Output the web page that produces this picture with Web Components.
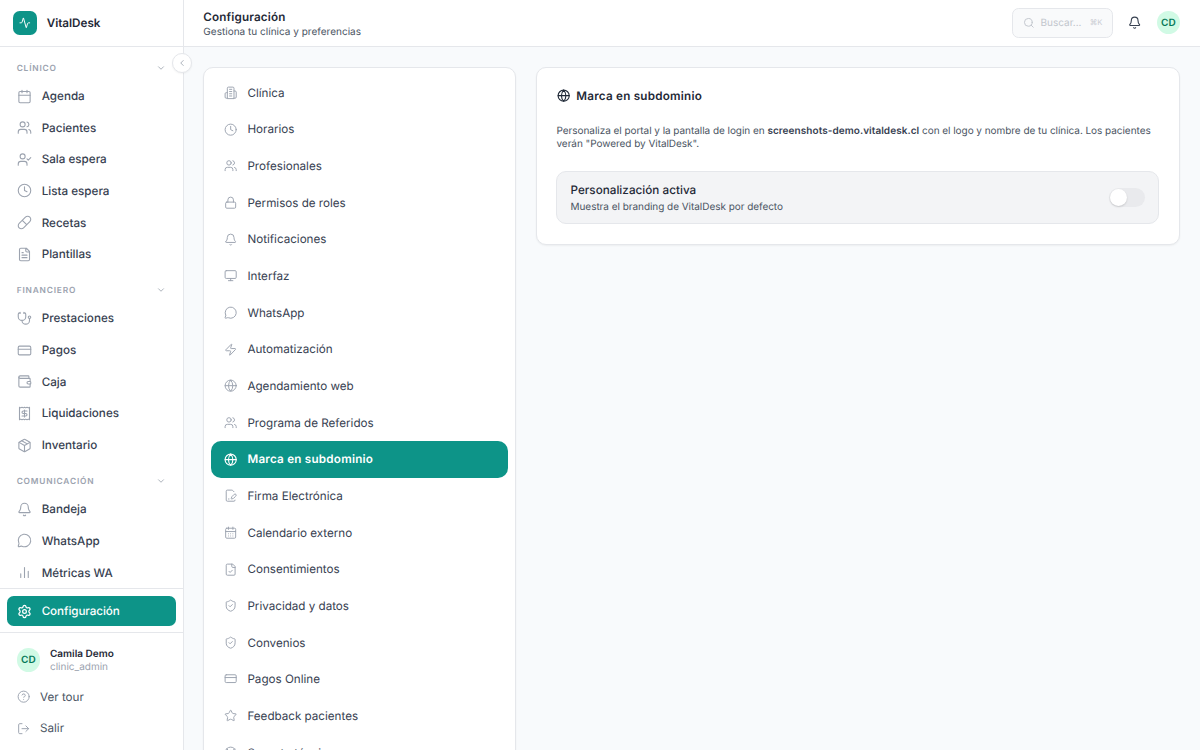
<!DOCTYPE html>
<html lang="es">
<head>
<meta charset="utf-8">
<title>VitalDesk – Configuración</title>
<style>
html,body{margin:0;height:100%;overflow:hidden}
body{font-family:Inter,"Liberation Sans",sans-serif;font-size:11.67px;color:#1f2937;background:#f8fafc;text-rendering:geometricPrecision}
</style>
</head>
<body>
<vd-app></vd-app>
<script>
const ICONS = {
  activity:'<path d="M22 12h-2.48a2 2 0 0 0-1.93 1.46l-2.35 8.36a.25.25 0 0 1-.48 0L9.24 2.18a.25.25 0 0 0-.48 0l-2.35 8.36A2 2 0 0 1 4.49 12H2"/>',
  calendar:'<path d="M8 2v4M16 2v4M3 10h18"/><rect width="18" height="18" x="3" y="4" rx="2"/>',
  days:'<path d="M8 2v4M16 2v4M3 10h18"/><rect width="18" height="18" x="3" y="4" rx="2"/><path d="M8 14h.01M12 14h.01M16 14h.01M8 18h.01M12 18h.01M16 18h.01"/>',
  users:'<path d="M16 21v-2a4 4 0 0 0-4-4H6a4 4 0 0 0-4 4v2"/><circle cx="9" cy="7" r="4"/><path d="M22 21v-2a4 4 0 0 0-3-3.87M16 3.13a4 4 0 0 1 0 7.75"/>',
  usercheck:'<path d="m16 11 2 2 4-4M16 21v-2a4 4 0 0 0-4-4H6a4 4 0 0 0-4 4v2"/><circle cx="9" cy="7" r="4"/>',
  clock:'<circle cx="12" cy="12" r="10"/><path d="M12 6v6l4 2"/>',
  pill:'<path d="m10.5 20.5 10-10a4.95 4.95 0 1 0-7-7l-10 10a4.95 4.95 0 1 0 7 7ZM8.5 8.5l7 7"/>',
  file:'<path d="M15 2H6a2 2 0 0 0-2 2v16a2 2 0 0 0 2 2h12a2 2 0 0 0 2-2V7ZM14 2v4a2 2 0 0 0 2 2h4M10 9H8M16 13H8M16 17H8"/>',
  filecheck:'<path d="M15 2H6a2 2 0 0 0-2 2v16a2 2 0 0 0 2 2h12a2 2 0 0 0 2-2V7ZM14 2v4a2 2 0 0 0 2 2h4M9 15l2 2 4-4"/>',
  filepen:'<path d="m18 5-2.414-2.414A2 2 0 0 0 14.172 2H6a2 2 0 0 0-2 2v16a2 2 0 0 0 2 2h12a2 2 0 0 0 2-2"/><path d="M21.378 12.626a1 1 0 0 0-3.004-3.004l-4.01 4.012a2 2 0 0 0-.506.854l-.837 2.87a.5.5 0 0 0 .62.62l2.87-.837a2 2 0 0 0 .854-.506zM8 18h1"/>',
  stethoscope:'<path d="M11 2v2M5 2v2M5 3H4a2 2 0 0 0-2 2v4a6 6 0 0 0 12 0V5a2 2 0 0 0-2-2h-1M8 15a6 6 0 0 0 12 0v-3"/><circle cx="20" cy="10" r="2"/>',
  card:'<rect width="20" height="14" x="2" y="5" rx="2"/><path d="M2 10h20"/>',
  wallet:'<path d="M19 7V4a1 1 0 0 0-1-1H5a2 2 0 0 0 0 4h15a1 1 0 0 1 1 1v4h-3a2 2 0 0 0 0 4h3a1 1 0 0 0 1-1v-2a1 1 0 0 0-1-1"/><path d="M3 5v14a2 2 0 0 0 2 2h15a1 1 0 0 0 1-1v-4"/>',
  receipt:'<path d="M4 2v20l2-1 2 1 2-1 2 1 2-1 2 1 2-1 2 1V2l-2 1-2-1-2 1-2-1-2 1-2-1-2 1Z"/><path d="M16 8h-6a2 2 0 1 0 0 4h4a2 2 0 1 1 0 4H8M12 17.5v-11"/>',
  box:'<path d="M11 21.73a2 2 0 0 0 2 0l7-4A2 2 0 0 0 21 16V8a2 2 0 0 0-1-1.73l-7-4a2 2 0 0 0-2 0l-7 4A2 2 0 0 0 3 8v8a2 2 0 0 0 1 1.73zM12 22V12"/><path d="M3.29 7 12 12l8.71-5M7.5 4.27l9 5.15"/>',
  bell:'<path d="M10.268 21a2 2 0 0 0 3.464 0M3.262 15.326A1 1 0 0 0 4 17h16a1 1 0 0 0 .74-1.673C19.41 13.956 18 12.499 18 8A6 6 0 0 0 6 8c0 4.499-1.411 5.956-2.738 7.326"/>',
  message:'<path d="M2.992 16.342a2 2 0 0 1 .094 1.167l-1.065 3.29a1 1 0 0 0 1.236 1.168l3.413-.998a2 2 0 0 1 1.099.092 10 10 0 1 0-4.777-4.719"/>',
  bars:'<path d="M18 20V10M12 20V4M6 20v-6"/>',
  gear:'<path d="M9.671 4.136a2.34 2.34 0 0 1 4.659 0 2.34 2.34 0 0 0 3.319 1.915 2.34 2.34 0 0 1 2.33 4.033 2.34 2.34 0 0 0 0 3.831 2.34 2.34 0 0 1-2.33 4.033 2.34 2.34 0 0 0-3.319 1.915 2.34 2.34 0 0 1-4.659 0 2.34 2.34 0 0 0-3.32-1.915 2.34 2.34 0 0 1-2.33-4.033 2.34 2.34 0 0 0 0-3.831A2.34 2.34 0 0 1 6.35 6.051a2.34 2.34 0 0 0 3.319-1.915"/><circle cx="12" cy="12" r="3"/>',
  help:'<circle cx="12" cy="12" r="10"/><path d="M9.09 9a3 3 0 0 1 5.83 1c0 2-3 3-3 3M12 17h.01"/>',
  logout:'<path d="m16 17 5-5-5-5M21 12H9M9 21H5a2 2 0 0 1-2-2V5a2 2 0 0 1 2-2h4"/>',
  building:'<path d="M6 22V4a2 2 0 0 1 2-2h8a2 2 0 0 1 2 2v18ZM6 12H4a2 2 0 0 0-2 2v6a2 2 0 0 0 2 2h2M18 9h2a2 2 0 0 1 2 2v9a2 2 0 0 1-2 2h-2M10 6h4M10 10h4M10 14h4M10 18h4"/>',
  lock:'<rect width="18" height="11" x="3" y="11" rx="2"/><path d="M7 11V7a5 5 0 0 1 10 0v4"/>',
  monitor:'<rect width="20" height="14" x="2" y="3" rx="2"/><path d="M8 21h8M12 17v4"/>',
  zap:'<path d="M4 14a1 1 0 0 1-.78-1.63l9.9-10.2a.5.5 0 0 1 .86.46l-1.92 6.02A1 1 0 0 0 13 10h7a1 1 0 0 1 .78 1.63l-9.9 10.2a.5.5 0 0 1-.86-.46l1.92-6.02A1 1 0 0 0 11 14z"/>',
  globe:'<circle cx="12" cy="12" r="10"/><path d="M12 2a14.5 14.5 0 0 0 0 20 14.5 14.5 0 0 0 0-20M2 12h20"/>',
  shield:'<path d="M20 13c0 5-3.5 7.5-7.66 8.95a1 1 0 0 1-.67-.01C7.5 20.5 4 18 4 13V6a1 1 0 0 1 1-1c2 0 4.5-1.2 6.24-2.72a1.17 1.17 0 0 1 1.52 0C14.51 3.81 17 5 19 5a1 1 0 0 1 1 1zM9 12l2 2 4-4"/>',
  star:'<path d="M11.525 2.295a.53.53 0 0 1 .95 0l2.31 4.679a2.123 2.123 0 0 0 1.595 1.16l5.166.756a.53.53 0 0 1 .294.904l-3.736 3.638a2.123 2.123 0 0 0-.611 1.878l.882 5.14a.53.53 0 0 1-.771.56l-4.618-2.428a2.122 2.122 0 0 0-1.973 0L6.396 21.01a.53.53 0 0 1-.77-.56l.881-5.139a2.122 2.122 0 0 0-.611-1.879L2.16 9.795a.53.53 0 0 1 .294-.906l5.165-.755a2.122 2.122 0 0 0 1.597-1.16z"/>',
  buoy:'<circle cx="12" cy="12" r="10"/><path d="m4.93 4.93 4.24 4.24M14.83 9.17l4.24-4.24M14.83 14.83l4.24 4.24M9.17 14.83l-4.24 4.24"/><circle cx="12" cy="12" r="4"/>',
  search:'<path d="m21 21-4.34-4.34"/><circle cx="11" cy="11" r="8"/>',
  down:'<path d="m6 9 6 6 6-6"/>',
  left:'<path d="m15 18-6-6 6-6"/>'
};

function define(name, html, setup){
  const t = document.createElement('template');
  t.innerHTML = html;
  customElements.define(name, class extends HTMLElement{
    connectedCallback(){
      if(this.shadowRoot) return;
      this.attachShadow({mode:'open'}).append(t.content.cloneNode(true));
      if(setup) setup(this, this.shadowRoot);
    }
  });
}

define('vd-icon', `<style>
:host{display:block;flex:none;width:var(--s,15px);height:var(--s,15px)}
svg{display:block;width:100%;height:100%;overflow:visible}
</style><svg viewBox="0 0 24 24" fill="none" stroke="currentColor" stroke-linecap="round" stroke-linejoin="round"></svg>`,
(el, r) => {
  const s = r.querySelector('svg');
  s.setAttribute('stroke-width', el.getAttribute('w') || '1.75');
  s.innerHTML = ICONS[el.getAttribute('name')];
});

define('vd-avatar', `<style>
:host{display:flex;flex:none;align-items:center;justify-content:center;width:23.33px;height:23.33px;border-radius:50%;background:#d1fae5;color:#047857;font-size:10px;font-weight:600}
span{padding-top:1px}
</style><span><slot></slot></span>`);

define('vd-nav-item', `<style>
:host{display:flex;align-items:center;gap:10px;height:30px;padding:0 10px;border-radius:6.67px;font-weight:500;color:#374151;font-size:11.67px}
vd-icon{color:#9ca3af}
:host([active]){background:#0d9488;color:#fff;letter-spacing:-.08px}
:host([active]) vd-icon{color:#fff}
:host([plain]){font-weight:400;color:#4b5563;gap:10px}
:host([plain]) vd-icon{--s:13.33px}
</style><vd-icon></vd-icon><span><slot></slot></span>`,
(el, r) => mountIcon(el, r));

function mountIcon(el, r){
  const old = r.querySelector('vd-icon');
  const ic = document.createElement('vd-icon');
  ic.setAttribute('name', el.getAttribute('icon'));
  if(el.hasAttribute('active')) ic.setAttribute('w', '2');
  old.replaceWith(ic);
}

define('vd-nav-section', `<style>
:host{display:block}
header{display:flex;align-items:center;justify-content:space-between;height:20px;margin-bottom:3px;padding:0 10px;font-size:8.33px;font-weight:600;letter-spacing:.83px;color:#9ca3af}
header span{padding-top:1px}
vd-icon{--s:10px}
div{display:flex;flex-direction:column;gap:1.67px}
</style><header><span></span><vd-icon name="down" w="2"></vd-icon></header><div><slot></slot></div>`,
(el, r) => { r.querySelector('span').textContent = el.getAttribute('label'); });

define('vd-sidebar', `<style>
:host{display:flex;flex-direction:column;position:relative;box-sizing:border-box;width:184px;height:750px;background:#fff;border-right:1px solid #e5e7eb}
.brand{display:flex;align-items:center;gap:10px;height:47px;padding-left:13.33px;box-sizing:border-box;border-bottom:1px solid #e5e7eb;flex:none;font-size:11.67px;font-weight:600;color:#1f2937}
.brand i{display:flex;align-items:center;justify-content:center;width:23.33px;height:23.33px;border-radius:6.67px;background:#0d9488;color:#fff}
nav{flex:1;min-height:0;overflow:hidden;display:flex;flex-direction:column;gap:11.2px;padding:11px 6.67px 0}
.conf{flex:none;padding:7px 7px 6px 6.67px;border-top:1px solid #e5e7eb;border-bottom:1px solid #e5e7eb}
.foot{flex:none;box-sizing:border-box;height:117px;padding:9px 6.67px 0;display:flex;flex-direction:column}
.me{display:flex;align-items:center;gap:10px;height:36px;padding-left:10px;margin-bottom:3.7px}
.me div{padding-top:1.2px}
.me b{display:block;font-size:10px;line-height:14px;font-weight:600;color:#1f2937}
.me small{display:block;font-size:10px;line-height:13px;color:#9ca3af}
.foot vd-nav-item{margin-bottom:1.67px}
.handle{position:absolute;left:172.3px;top:53.3px;width:20px;height:20px;box-sizing:border-box;border:1px solid #e5e7eb;border-radius:50%;background:#fff;display:flex;align-items:center;justify-content:center;color:#9ca3af;box-shadow:0 1px 2px #0000000d}
</style>
<div class="brand"><i><vd-icon name="activity" w="2" style="--s:11.67px"></vd-icon></i><span>VitalDesk</span></div>
<nav>
<vd-nav-section label="CLÍNICO">
<vd-nav-item icon="calendar">Agenda</vd-nav-item><vd-nav-item icon="users">Pacientes</vd-nav-item><vd-nav-item icon="usercheck">Sala espera</vd-nav-item><vd-nav-item icon="clock">Lista espera</vd-nav-item><vd-nav-item icon="pill">Recetas</vd-nav-item><vd-nav-item icon="file">Plantillas</vd-nav-item>
</vd-nav-section>
<vd-nav-section label="FINANCIERO">
<vd-nav-item icon="stethoscope">Prestaciones</vd-nav-item><vd-nav-item icon="card">Pagos</vd-nav-item><vd-nav-item icon="wallet">Caja</vd-nav-item><vd-nav-item icon="receipt">Liquidaciones</vd-nav-item><vd-nav-item icon="box">Inventario</vd-nav-item>
</vd-nav-section>
<vd-nav-section label="COMUNICACIÓN">
<vd-nav-item icon="bell">Bandeja</vd-nav-item><vd-nav-item icon="message">WhatsApp</vd-nav-item><vd-nav-item icon="bars">Métricas WA</vd-nav-item>
</vd-nav-section>
</nav>
<div class="conf"><vd-nav-item icon="gear" active>Configuración</vd-nav-item></div>
<div class="foot">
<div class="me"><vd-avatar>CD</vd-avatar><div><b>Camila Demo</b><small>clinic_admin</small></div></div>
<vd-nav-item icon="help" plain>Ver tour</vd-nav-item><vd-nav-item icon="logout" plain>Salir</vd-nav-item>
</div>
<div class="handle"><vd-icon name="left" w="2" style="--s:10px"></vd-icon></div>`);

define('vd-topbar', `<style>
:host{display:flex;align-items:center;box-sizing:border-box;height:46.67px;padding:0 20px;background:#fff;border-bottom:1px solid #e5e7eb}
.t{flex:1;padding-top:4px}
h1{margin:0;font-size:11.67px;line-height:15px;font-weight:600;color:#1f2937;letter-spacing:.15px}
p{margin:0;font-size:10px;line-height:15px;color:#4b5563;letter-spacing:.01px}
.search{display:flex;align-items:center;box-sizing:border-box;width:101.5px;height:30px;margin-right:14.5px;padding:0 10px;gap:6px;border:1px solid #e5e7eb;border-radius:6.67px;background:#f9fafb;color:#c2c6cd;font-size:10px}
.search span{padding-top:1px}
.search kbd{margin-left:auto;font:7.6px Inter,"DejaVu Sans",sans-serif;color:#c9ccd2}
.bell{color:#374151;margin-right:15.5px}
</style>
<div class="t"><h1>Configuración</h1><p>Gestiona tu clínica y preferencias</p></div>
<div class="search"><vd-icon name="search" w="2" style="--s:11.67px"></vd-icon><span>Buscar...</span><kbd>⌘K</kbd></div>
<vd-icon class="bell" name="bell" w="2" style="--s:13.33px"></vd-icon>
<vd-avatar>CD</vd-avatar>`);

define('vd-setting', `<style>
:host{display:flex;align-items:center;gap:9.8px;height:36.67px;padding:0 13.33px;border-radius:10px;font-size:11.67px;color:#374151;letter-spacing:-.015px}
vd-icon{--s:13.33px;color:#9ca3af}
span{padding-top:.1px}
:host([active]){background:#0d9488;color:#fff;font-weight:600;letter-spacing:.23px}
:host([active]) vd-icon{color:#fff}
</style><vd-icon></vd-icon><span><slot></slot></span>`, (el, r) => mountIcon(el, r));

define('vd-card', `<style>
:host{display:block;box-sizing:border-box;background:#fff;border:1px solid #e5e7eb;border-radius:10px;box-shadow:0 1px 2px #0000000d}
</style><slot></slot>`);

define('vd-switch', `<style>
:host{display:flex;align-items:center;box-sizing:border-box;width:36.67px;height:19px;padding:0 1.2px;border-radius:10px;background:#e9eaed}
i{width:17px;height:17px;border-radius:50%;background:#fff;box-shadow:0 1px 2px #00000026}
</style><i></i>`);

define('vd-branding', `<style>
:host{display:block;padding:20px 19.67px 20px}
h2{display:flex;align-items:center;gap:6.2px;margin:0;height:17px;padding-left:.3px;font-size:11.67px;font-weight:600;color:#1f2937;letter-spacing:.23px}
p{margin:20.3px 0 18.9px;font-size:10px;line-height:13.5px;color:#4b5563;letter-spacing:-.045px}
p b{font-weight:600;color:#374151;letter-spacing:.06px}
.row{display:flex;align-items:center;justify-content:space-between;box-sizing:border-box;height:53.3px;padding:0 13px;border:1px solid #e5e7eb;border-radius:10px;background:#f3f4f6}
.row strong{display:block;padding-top:2.2px;font-size:11.67px;line-height:17px;font-weight:500;color:#1f2937;letter-spacing:.03px}
.row span{display:block;font-size:10px;line-height:16.2px;color:#4b5563;letter-spacing:-.04px}
</style>
<h2><vd-icon name="globe" w="2" style="--s:13.33px"></vd-icon><span>Marca en subdominio</span></h2>
<p>Personaliza el portal y la pantalla de login en <b>screenshots-demo.vitaldesk.cl</b> con el logo y nombre de tu clínica. Los pacientes verán "Powered by VitalDesk".</p>
<div class="row"><div><strong>Personalización activa</strong><span>Muestra el branding de VitalDesk por defecto</span></div><vd-switch></vd-switch></div>`);

define('vd-app', `<style>
:host{display:grid;grid-template-columns:183.33px 1fr;height:750px;overflow:hidden}
vd-sidebar{z-index:2}
.main{min-width:0;height:750px;overflow:hidden}
.content{display:grid;grid-template-columns:312.5px 1fr;gap:20px;align-items:start;padding:20px}
.menu{padding:6.67px}
</style>
<vd-sidebar></vd-sidebar>
<div class="main"><vd-topbar></vd-topbar>
<div class="content">
<vd-card class="menu">
<vd-setting icon="building">Clínica</vd-setting><vd-setting icon="clock">Horarios</vd-setting><vd-setting icon="users">Profesionales</vd-setting><vd-setting icon="lock">Permisos de roles</vd-setting><vd-setting icon="bell">Notificaciones</vd-setting><vd-setting icon="monitor">Interfaz</vd-setting><vd-setting icon="message">WhatsApp</vd-setting><vd-setting icon="zap">Automatización</vd-setting><vd-setting icon="globe">Agendamiento web</vd-setting><vd-setting icon="users">Programa de Referidos</vd-setting><vd-setting icon="globe" active>Marca en subdominio</vd-setting><vd-setting icon="filepen">Firma Electrónica</vd-setting><vd-setting icon="days">Calendario externo</vd-setting><vd-setting icon="filecheck">Consentimientos</vd-setting><vd-setting icon="shield">Privacidad y datos</vd-setting><vd-setting icon="shield">Convenios</vd-setting><vd-setting icon="card">Pagos Online</vd-setting><vd-setting icon="star">Feedback pacientes</vd-setting><vd-setting icon="buoy">Soporte técnico</vd-setting>
</vd-card>
<vd-card><vd-branding></vd-branding></vd-card>
</div></div>`);
</script>
</body>
</html>
